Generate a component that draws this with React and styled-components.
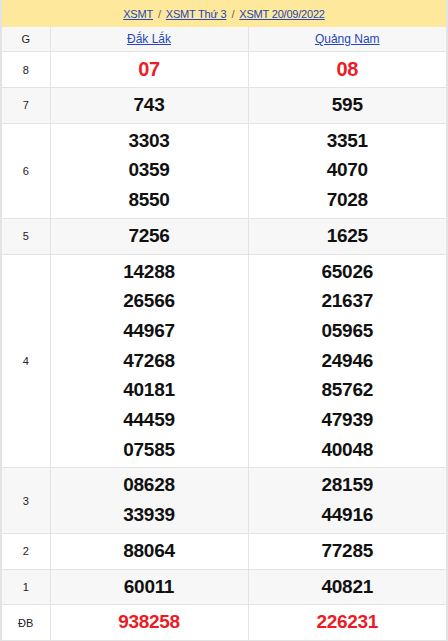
import React from 'react';
import styled, { createGlobalStyle } from 'styled-components';

const Global = createGlobalStyle`
  body {
    margin: 0;
    background: #fff;
    font-family: "Liberation Sans", Arial, sans-serif;
  }
`;

const Wrapper = styled.div`
  width: 448px;
  box-sizing: border-box;
  border: 2px solid #e3e3e3;
  border-top: none;
`;

const Crumbs = styled.div`
  height: 27px;
  background: #fde89b;
  display: flex;
  align-items: center;
  justify-content: center;
  gap: 5px;
  font-size: 11px;
  letter-spacing: -0.2px;
  color: #666;
`;

const Link = styled.a`
  color: #2546b8;
  text-decoration: underline;
  cursor: pointer;
`;

const Table = styled.table`
  width: 100%;
  border-collapse: collapse;
  table-layout: fixed;
`;

const Row = styled.tr`
  background: ${p => (p.$shade ? '#f7f7f7' : '#fff')};
`;

const HeadCell = styled.th`
  height: 24px;
  padding: 0;
  font-weight: normal;
  font-size: ${p => (p.$label ? '11px' : '12px')};
  color: #222;
  text-align: center;
  border: 1px solid #e3e3e3;
  border-top: none;
  &:first-child { border-left: none; }
  &:last-child { border-right: none; }
`;

const Label = styled.td`
  padding: 0;
  font-size: 11px;
  color: #222;
  text-align: center;
  border: 1px solid #e3e3e3;
  border-left: none;
`;

const Cell = styled.td`
  padding: 2px 0 3px;
  text-align: center;
  border: 1px solid #e3e3e3;
  &:last-child { border-right: none; }
`;

const Num = styled.div`
  font-size: ${p => (p.$big ? '20px' : '19px')};
  line-height: ${p => (p.$big ? '30px' : '29.7px')};
  letter-spacing: -0.3px;
  font-weight: bold;
  color: ${p => (p.$red ? '#ed1c24' : '#111')};
`;

const prizes = [
  { g: '8', a: ['07'], b: ['08'], red: true, big: true },
  { g: '7', a: ['743'], b: ['595'] },
  { g: '6', a: ['3303', '0359', '8550'], b: ['3351', '4070', '7028'] },
  { g: '5', a: ['7256'], b: ['1625'] },
  {
    g: '4',
    a: ['14288', '26566', '44967', '47268', '40181', '44459', '07585'],
    b: ['65026', '21637', '05965', '24946', '85762', '47939', '40048'],
  },
  { g: '3', a: ['08628', '33939'], b: ['28159', '44916'] },
  { g: '2', a: ['88064'], b: ['77285'] },
  { g: '1', a: ['60011'], b: ['40821'] },
  { g: 'ĐB', a: ['938258'], b: ['226231'], red: true },
];

export default function App() {
  return (
    <Wrapper>
      <Global />
      <Crumbs>
        <Link>XSMT</Link>/<Link>XSMT Thứ 3</Link>/<Link>XSMT 20/09/2022</Link>
      </Crumbs>
      <Table>
        <colgroup>
          <col style={{ width: 48 }} />
          <col />
          <col />
        </colgroup>
        <thead>
          <Row $shade>
            <HeadCell $label>G</HeadCell>
            <HeadCell><Link>Đắk Lắk</Link></HeadCell>
            <HeadCell><Link>Quảng Nam</Link></HeadCell>
          </Row>
        </thead>
        <tbody>
          {prizes.map((p, i) => (
            <Row key={p.g} $shade={i % 2 === 1}>
              <Label>{p.g}</Label>
              <Cell>
                {p.a.map(n => <Num key={n} $red={p.red} $big={p.big}>{n}</Num>)}
              </Cell>
              <Cell>
                {p.b.map(n => <Num key={n} $red={p.red} $big={p.big}>{n}</Num>)}
              </Cell>
            </Row>
          ))}
        </tbody>
      </Table>
    </Wrapper>
  );
}
